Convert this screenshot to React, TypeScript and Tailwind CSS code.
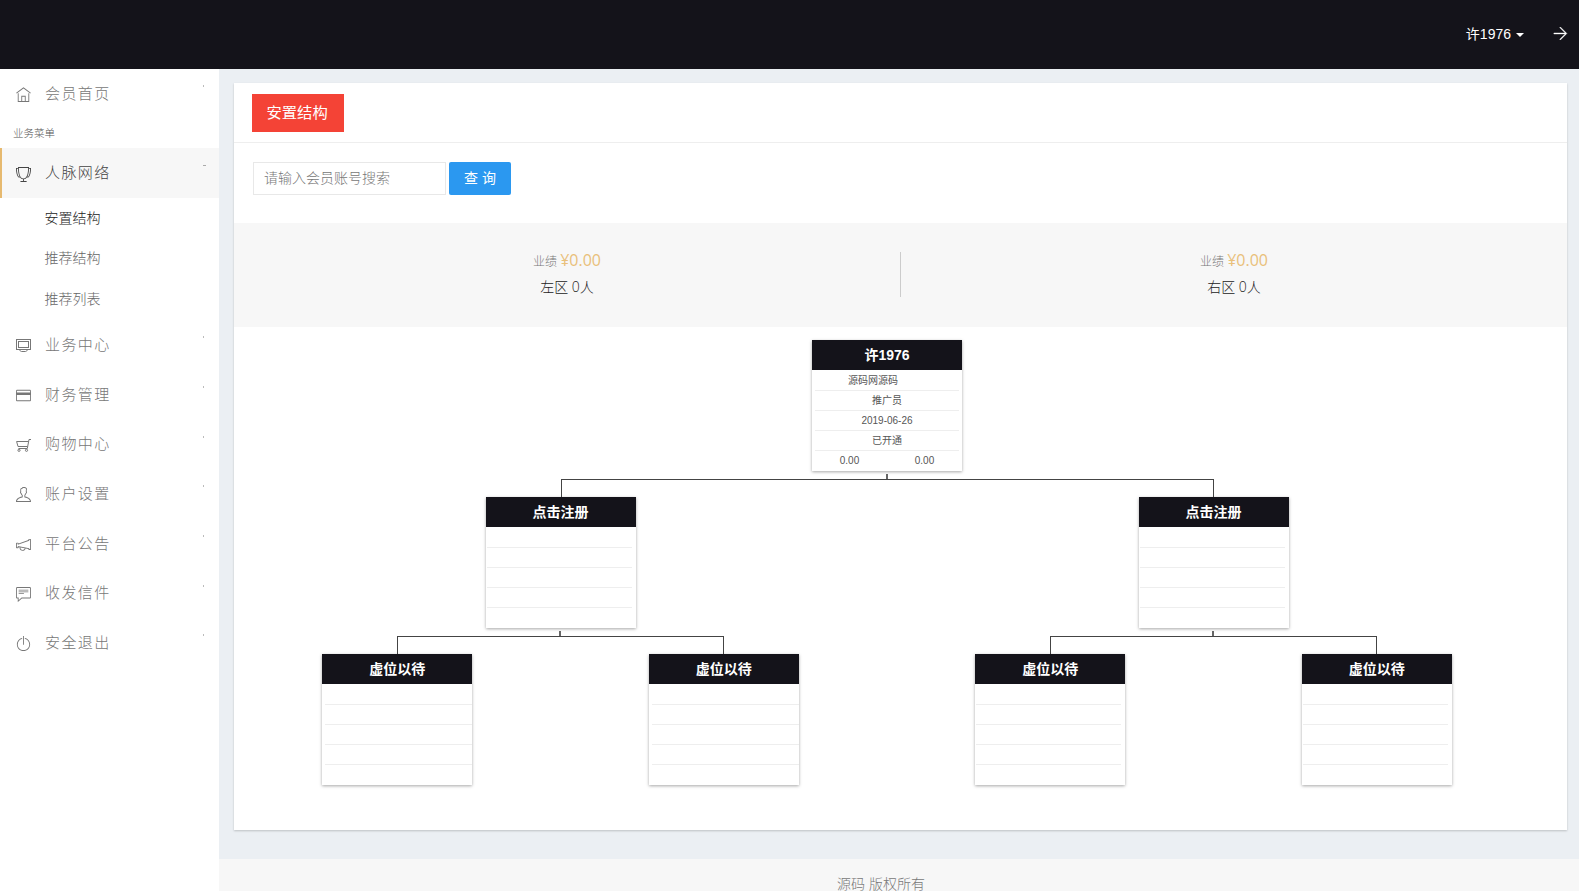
import type { ReactNode } from "react";
import {
    TfiAnnouncement,
    TfiArrowRight,
    TfiCommentAlt,
    TfiCreditCard,
    TfiCup,
    TfiHome,
    TfiPowerOff,
    TfiUser,
} from "react-icons/tfi";

type Person = {
    title: string;
    rows?: string[];
    amounts?: [string, string];
    inset?: "left" | "right" | "both";
};

const ScreenIcon = () => (
    <svg
        width="15"
        height="15"
        viewBox="0 0 15 15"
        fill="none"
        stroke="currentColor"
    >
        <rect x="0.5" y="1.5" width="14" height="10" />
        <rect x="2.5" y="3.5" width="10" height="6" />
        <path d="M3.5 11.5c.5 1.3 1 2 2 2h4c1 0 1.5-.7 2-2" />
    </svg>
);

const CartIcon = () => (
    <svg
        width="15"
        height="15"
        viewBox="0 0 15 15"
        fill="none"
        stroke="currentColor"
    >
        <path d="M15 1.500h-2L11.300 10.500H2.500M12.500 3.500H.6L2 8.500h9.500" />
        <circle cx="3" cy="12.300" r="1.100" />
        <circle cx="10.500" cy="12.300" r="1.100" />
    </svg>
);

const MenuItem = ({
    icon,
    label,
    active = false,
}: {
    icon: ReactNode;
    label: string;
    active?: boolean;
}) => (
    <a
        className={
            active
                ? "flex h-[49.7px] items-center border-l-2 border-[#e6b96f] bg-[#f7f7f7] pl-3.5 text-[#444]"
                : "flex h-[49.7px] items-center pl-4 text-[#777]"
        }
    >
        <span className="mt-0.5 w-[29px] text-[15px]">{icon}</span>
        <span className="text-[15px] leading-5 tracking-[1.4px]">{label}</span>
        <span
            className={
                active
                    ? "mr-[13px] mb-[15px] ml-auto h-px w-[3px] bg-[#aaa]"
                    : "mr-[15px] mb-[15px] ml-auto h-0.5 w-px bg-[#bbb]"
            }
        />
    </a>
);

const Stat = ({ side }: { side: string }) => (
    <div className="flex-1 pt-[25px] text-center font-['Open_Sans','Noto_Sans_CJK_SC',sans-serif]">
        <div className="text-xs leading-6 text-[#777]">
            业绩{" "}
            <span className="text-base leading-6 font-normal text-[#e9c07a]">
                ¥0.00
            </span>
        </div>
        <div className="mt-px text-sm leading-6 text-[#222]">{side} 0人</div>
    </div>
);

const Card = ({ title, rows = ["", "", "", ""], amounts, inset = "both" }: Person) => (
    <div className="h-[131px] w-[150px] bg-white text-center text-[10px] text-[#555] shadow-[0_1px_3px_rgba(0,0,0,0.35)]">
        <div className="h-[30px] bg-[#14131a] text-sm leading-[30px] font-bold text-white">
            {title}
        </div>
        <div
            className={
                inset === "left"
                    ? "pt-px pr-0 pl-[3px]"
                    : inset === "right"
                      ? "pt-px pr-[4px] pl-px"
                      : "px-[3px] pt-px"
            }
        >
            {rows.map((row, i) => (
                <div
                    key={i}
                    className="h-5 border-b border-[#eee] leading-[19px] whitespace-pre"
                >
                    {row}
                </div>
            ))}
        </div>
        {amounts && (
            <div className="flex leading-[19px]">
                <span className="flex-1">{amounts[0]}</span>
                <span className="flex-1">{amounts[1]}</span>
            </div>
        )}
    </div>
);

// a parent card with the lines down to its two children
const Branch = ({ person, children }: { person: Person; children?: ReactNode }) => (
    <div className="flex flex-1 flex-col items-center">
        <Card {...person} />
        {children && (
            <>
                <div
                    className={
                        person.inset
                            ? "mt-[3px] mr-0.5 h-[5px] w-0.5 bg-[#666]"
                            : "mt-[3px] h-[5px] w-0.5 bg-[#666]"
                    }
                />
                <div className="h-[18px] w-1/2 border-x border-t border-[#444]" />
                <div className="flex w-full">{children}</div>
            </>
        )}
    </div>
);

const App = () => {
    return (
        <div className="h-[891px] overflow-hidden bg-[#ebeff3] font-['Liberation_Sans','Noto_Sans_CJK_SC',sans-serif]">
            <header className="flex h-[69px] items-center justify-end bg-[#14131a] pr-[11px] pb-0.5 text-sm text-white">
                <span>许1976</span>
                <span className="mt-0.5 ml-[5px] border-x-4 border-t-4 border-x-transparent border-t-white" />
                <TfiArrowRight className="ml-[29px] text-[15px]" strokeWidth={0.5} />
            </header>

            <div className="flex h-[822px]">
                <aside className="w-[219px] bg-white font-light">
                    <MenuItem icon={<TfiHome />} label="会员首页" />
                    <div className="h-[29.6px] pl-[13px] text-[10.5px] leading-[28px] text-[#555]">
                        业务菜单
                    </div>
                    <MenuItem icon={<TfiCup />} label="人脉网络" active />
                    <div className="h-[122px] pl-[44.5px] text-sm leading-[40.5px] text-[#666]">
                        <div className="text-[#222]">安置结构</div>
                        <div>推荐结构</div>
                        <div>推荐列表</div>
                    </div>
                    <MenuItem icon={<ScreenIcon />} label="业务中心" />
                    <MenuItem icon={<TfiCreditCard />} label="财务管理" />
                    <MenuItem icon={<CartIcon />} label="购物中心" />
                    <MenuItem icon={<TfiUser />} label="账户设置" />
                    <MenuItem icon={<TfiAnnouncement />} label="平台公告" />
                    <MenuItem icon={<TfiCommentAlt />} label="收发信件" />
                    <MenuItem icon={<TfiPowerOff />} label="安全退出" />
                </aside>

                <main className="flex flex-1 flex-col">
                    <section className="mt-3.5 mr-3 ml-[15px] h-[747px] bg-white shadow-[0_1px_2px_rgba(0,0,0,0.2)]">
                        <div className="h-[60px] border-b border-[#eee] pt-[11px] pl-[18px]">
                            <h1 className="h-[38px] w-[92px] bg-[#f44336] pl-[14.5px] text-[15.3px] leading-[38px] text-white">
                                安置结构
                            </h1>
                        </div>
                        <div className="flex h-20 gap-[3px] pt-[19px] pl-[19px] text-sm">
                            <input
                                className="h-[33px] w-[193px] border border-[#e8e8e8] px-2.5 pb-0.5 font-light placeholder:text-[#777]"
                                placeholder="请输入会员账号搜索"
                            />
                            <button className="h-[33px] w-[62px] rounded-xs bg-[#2b98f0] pb-0.5 text-white">
                                查 询
                            </button>
                        </div>
                        <div className="flex h-[104px] bg-[#f7f7f7] font-light">
                            <Stat side="左区" />
                            <div className="mt-[29px] h-[45px] w-px bg-[#ccc]" />
                            <Stat side="右区" />
                        </div>
                        <div className="flex w-[1306px] pt-[13px]">
                            <Branch
                                person={{
                                    title: "许1976",
                                    rows: ["源码网源码          ", "推广员", "2019-06-26", "已开通"],
                                    amounts: ["0.00", "0.00"],
                                }}
                            >
                                <Branch person={{ title: "点击注册", inset: "right" }}>
                                    <Branch person={{ title: "虚位以待", inset: "left" }} />
                                    <Branch person={{ title: "虚位以待", inset: "left" }} />
                                </Branch>
                                <Branch person={{ title: "点击注册", inset: "right" }}>
                                    <Branch person={{ title: "虚位以待", inset: "right" }} />
                                    <Branch person={{ title: "虚位以待", inset: "right" }} />
                                </Branch>
                            </Branch>
                        </div>
                    </section>
                    <footer className="mt-[29px] h-8 bg-[#f7f7f7] pt-[15px] pr-9 text-center text-sm font-light text-[#777]">
                        源码 版权所有
                    </footer>
                </main>
            </div>
        </div>
    );
};

export default App;
